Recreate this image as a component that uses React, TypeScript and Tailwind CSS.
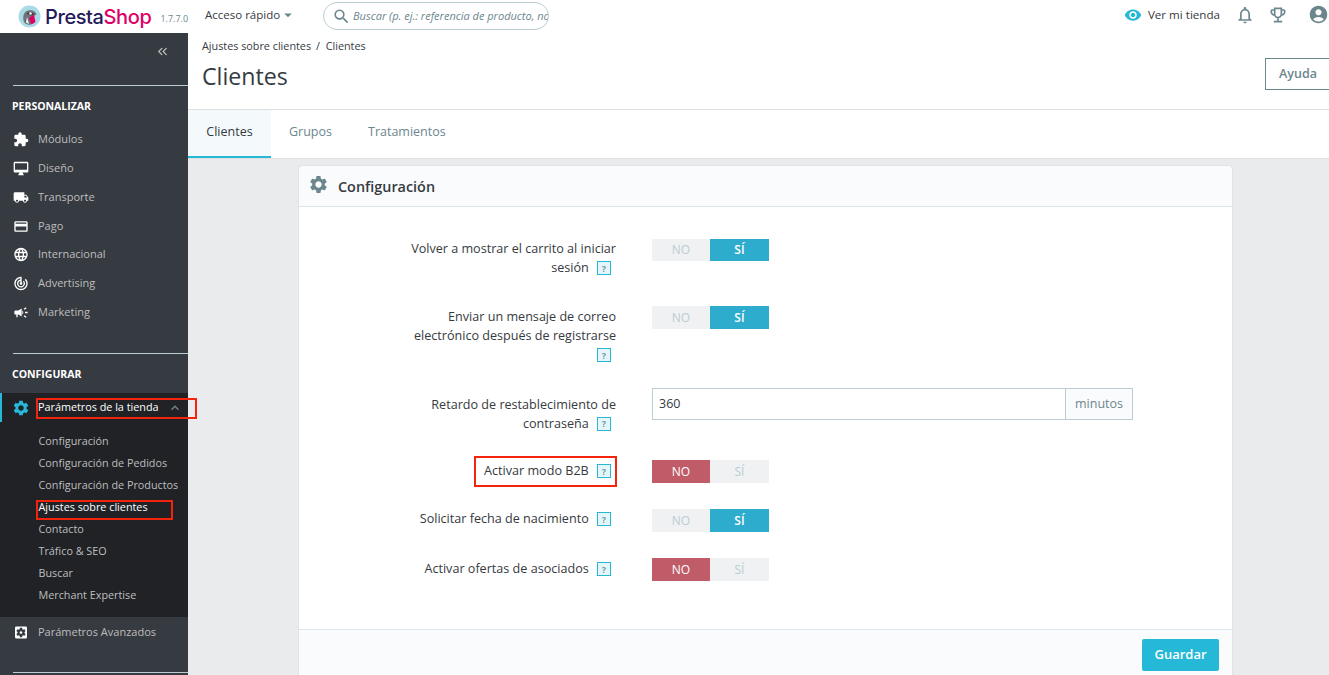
import React from "react";
import {
  MdExtension, MdOutlineDesktopMac, MdLocalShipping, MdPayment, MdLanguage, MdTrackChanges, MdCampaign,
  MdSettings, MdSettingsApplications, MdVisibility, MdNotificationsNone, MdOutlineEmojiEvents,
  MdAccountCircle, MdSearch, MdKeyboardArrowUp, MdArrowDropDown,
} from "react-icons/md";
import { ChevronsLeft } from "lucide-react";

const font = { fontFamily: '"Open Sans", sans-serif' };

function Logo() {
  return (
    <svg width="23" height="23" viewBox="0 0 23 23" className="shrink-0">
      <circle cx="11.5" cy="11.5" r="11" fill="#a9dbe6" />
      <path d="M6 17c-1.500-4-1-10 4-11.500 4-1 8 1 8.500 4l-3 1.500 1 6c-3 3.500-8 3.500-10.500 0z" fill="#6e7378" />
      <path d="M8.500 8.500c2-1.500 6-1.500 8 .8l-3.500 1.200z" fill="#34383d" />
      <circle cx="12.500" cy="8.500" r="1.300" fill="#fff" />
      <path d="M11 13l5-3.500 1.500 7.500-4 2.500z" fill="#df0067" />
      <path d="M9 12l2 7-3-1.500z" fill="#f4f4f4" />
    </svg>
  );
}

function SideItem({ icon, label, className = "" }: { icon: React.ReactNode; label: string; className?: string }) {
  return (
    <div className={`flex items-center pl-[13px] text-[11px] text-[#bebebe] ${className || "h-[29px]"}`}>
      <span className="w-[16px] h-[16px] flex items-center justify-center text-white text-[19px] mr-[9px]">{icon}</span>
      {label}
    </div>
  );
}

function SubItem({ label, active }: { label: string; active?: boolean }) {
  return (
    <div className={`h-[22px] flex items-center pl-[38.500px] text-[10.800px] ${active ? "text-white" : "text-[#bebebe]"}`}>{label}</div>
  );
}

function Help() {
  return (
    <span className="inline-flex align-middle w-[14px] h-[14px] -mt-[1px] ml-[5px] mr-[5px] items-center justify-center border border-[#25b9d7] bg-[#e4f6f9] text-[#6c9bae] text-[9px] font-bold leading-none">?</span>
  );
}

function Toggle({ on, short }: { on: boolean; short?: boolean }) {
  return (
    <div className={`flex w-[117px] text-[12px] bg-[#eff1f2] text-center ${short ? "h-[22px] leading-[22px]" : "h-[23px] leading-[23px]"}`}>
      <div className={`w-[58px] ${on ? "text-[#bbcdd2]" : "bg-[#c05c67] text-white font-medium"}`}>NO</div>
      <div className={`w-[59px] ${on ? "bg-[#2eacce] text-white font-semibold" : "text-[#bbcdd2]"}`}>SÍ</div>
    </div>
  );
}

function Row({ className, children, control }: { className: string; children: React.ReactNode; control: React.ReactNode }) {
  return (
    <div className={`flex ${className}`}>
      <div className="w-[317px] mr-[36px] shrink-0 text-right text-[12.600px] leading-[19px] text-[#363a41]">{children}</div>
      {control}
    </div>
  );
}

export default function App() {
  return (
    <div style={font} className="relative w-[1329px] h-[675px] overflow-hidden bg-white text-[#363a41]">
      <header className="h-[33px] flex items-center bg-white">
        <div className="flex items-center pl-[18px] w-[205px] shrink-0">
          <Logo />
          <span style={{ fontFamily: "Inter, sans-serif" }} className="ml-[4px] text-[20px] font-medium leading-none tracking-[-0.4px] text-[#251b5b]">
            Presta<span className="text-[#df0067]">Shop</span>
          </span>
          <span className="ml-[9px] mt-[4px] text-[9px] text-[#6c868e] whitespace-nowrap">1.7.7.0</span>
        </div>
        <div className="flex items-center w-[118px] shrink-0 text-[11.500px] text-[#363a41] -mt-[3px]">
          Acceso rápido
          <MdArrowDropDown className="text-[18px] text-[#6c868e] -ml-[1px]" />
        </div>
        <div className="w-[226px] h-[28px] shrink-0 -mt-[1px] rounded-full border border-[#bbcdd2] flex items-center pl-[8px] overflow-hidden">
          <MdSearch className="text-[19px] text-[#6c868e] shrink-0" />
          <span className="ml-[2px] text-[11px] italic text-[#6c868e] whitespace-nowrap">Buscar (p. ej.: referencia de producto, no</span>
        </div>
        <div className="ml-auto flex items-center -mt-[4px] text-[#6c868e]">
          <MdVisibility className="text-[18px] text-[#25b9d7]" />
          <span className="ml-[6px] text-[11.600px] text-[#363a41]">Ver mi tienda</span>
          <MdNotificationsNone className="ml-[15px] text-[20px]" />
          <MdOutlineEmojiEvents className="ml-[13px] text-[20px]" />
          <MdAccountCircle className="ml-[20px] mr-[0px] text-[21px]" />
        </div>
      </header>

      <div className="flex h-[642px]">
        <aside className="w-[188px] shrink-0 bg-[#363a41] overflow-hidden">
          <div className="h-[52px] flex justify-end pt-[11px] pr-[18px]">
            <ChevronsLeft className="text-[#bebebe]" size={15} strokeWidth={2} />
          </div>
          <div className="ml-[13px] h-px bg-[#bbcdd2]" />
          <div className="h-[39px] flex items-center pt-[2px] pl-[12px] text-[10.500px] font-bold text-white">PERSONALIZAR</div>
          <SideItem icon={<MdExtension />} label="Módulos" />
          <SideItem icon={<MdOutlineDesktopMac />} label="Diseño" />
          <SideItem icon={<MdLocalShipping />} label="Transporte" />
          <SideItem icon={<MdPayment />} label="Pago" className="h-[28px]" />
          <SideItem icon={<MdLanguage />} label="Internacional" />
          <SideItem icon={<MdTrackChanges />} label="Advertising" />
          <SideItem icon={<MdCampaign />} label="Marketing" />
          <div className="ml-[13px] mt-[26px] h-px bg-[#bbcdd2]" />
          <div className="h-[39px] flex items-center pt-[2px] pl-[12px] text-[10.500px] font-bold text-white">CONFIGURAR</div>
          <div className="bg-[#202226] pb-[11px]">
            <div className="h-[29px] flex items-center pl-[11px] border-l-2 border-[#25b9d7] text-[10.800px] text-white">
              <MdSettings className="w-[16px] h-[16px] text-[17px] text-[#25b9d7] mr-[9px] scale-115" />
              Parámetros de la tienda
              <MdKeyboardArrowUp className="ml-[8px] text-[16px] text-[#6c868e]" />
            </div>
            <div className="pt-[8px]">
              <SubItem label="Configuración" />
              <SubItem label="Configuración de Pedidos" />
              <SubItem label="Configuración de Productos" />
              <SubItem label="Ajustes sobre clientes" active />
              <SubItem label="Contacto" />
              <SubItem label="Tráfico & SEO" />
              <SubItem label="Buscar" />
              <SubItem label="Merchant Expertise" />
            </div>
          </div>
          <SideItem icon={<MdSettingsApplications />} label="Parámetros Avanzados" className="h-[30px]" />
          <div className="ml-[13px] mt-[25px] h-px bg-[#bbcdd2]" />
        </aside>

        <main className="flex-1 min-w-0 bg-[#eaebec] overflow-hidden">
          <div className="h-[77px] bg-white border-b border-[#dfdfdf] flex justify-between pl-[14px]">
            <div>
              <div className="mt-[5px] text-[10.800px] leading-[16px] text-[#363a41]">
                Ajustes sobre clientes<span className="ml-[2px]"> /</span> <span className="ml-[3px]">Clientes</span>
              </div>
              <h1 className="mt-[6px] text-[23.200px] leading-[33px] font-normal text-[#363a41]">Clientes</h1>
            </div>
            <div className="shrink-0 w-[70px] h-[32px] mt-[25px] -mr-[6px] border border-[#6c868e] flex items-center justify-center pr-[4px] text-[12.500px] font-semibold text-[#6c868e]">Ayuda</div>
          </div>
          <nav className="h-[49px] bg-white border-b border-[#dfdfdf] flex text-[12.500px] text-[#6c868e]">
            <div className="w-[83px] h-[48px] bg-[#f4f9fb] border-b-2 border-[#25b9d7] flex items-center justify-center pb-[2px] text-[#363a41]">Clientes</div>
            <div className="ml-[18px] h-[45px] flex items-center">Grupos</div>
            <div className="ml-[36px] h-[45px] flex items-center">Tratamientos</div>
          </nav>

          <section className="ml-[110px] mt-[6px] w-[935px] h-[520px] bg-white border border-[#dbe6e9] rounded-t-[5px]">
            <div className="h-[41px] bg-[#fafbfc] border-b border-[#dbe6e9] rounded-t-[5px] flex items-center pl-[9px] text-[14.400px] font-semibold text-[#363a41]">
              <MdSettings className="text-[21px] text-[#6c868e] -mt-[3px]" />
              <span className="ml-[9px] mt-[1px]">Configuración</span>
            </div>
            <div className="h-[422px] pt-[32px]">
              <Row className="h-[67px]" control={<Toggle on short />}>
                Volver a mostrar el carrito al iniciar<br />sesión <Help />
              </Row>
              <Row className="h-[82px]" control={<Toggle on />}>
                <div className="pt-[1px]">Enviar un mensaje de correo<br />electrónico después de registrarse<br /><Help /></div>
              </Row>
              <Row
                className="h-[72px]"
                control={
                  <div className="w-[481px] h-[32px] flex border border-[#bbcdd2] text-[12.500px]">
                    <input readOnly value="360" className="flex-1 min-w-0 px-[6px] outline-none text-[#363a41]" />
                    <div className="w-[67px] border-l border-[#bbcdd2] bg-[#fafbfc] text-[#6c868e] flex items-center justify-center">minutos</div>
                  </div>
                }
              >
                <div className="pt-[6.500px]">Retardo de restablecimiento de<br />contraseña <Help /></div>
              </Row>
              <Row className="h-[49px]" control={<Toggle on={false} />}><div className="pt-[1px]">Activar modo B2B <Help /></div></Row>
              <Row className="h-[49px]" control={<Toggle on />}>Solicitar fecha de nacimiento <Help /></Row>
              <Row className="h-[49px]" control={<Toggle on={false} />}><div className="pt-[1px]">Activar ofertas de asociados <Help /></div></Row>
            </div>
            <div className="h-[56px] bg-[#fafbfc] border-t border-[#dbe6e9] flex justify-end pt-[9px] pr-[13px]">
              <div className="w-[77px] h-[32px] bg-[#25b9d7] rounded-[2px] flex items-center justify-center text-[13px] font-semibold text-white">Guardar</div>
            </div>
          </section>
        </main>
      </div>

      <div className="absolute left-[36px] top-[398px] w-[161px] h-[21px] border-2 border-[#f4240c]" />
      <div className="absolute left-[36px] top-[500px] w-[137px] h-[20px] border-2 border-[#f4240c]" />
      <div className="absolute left-[474px] top-[456px] w-[143px] h-[31px] border-2 border-[#f4240c]" />
    </div>
  );
}
